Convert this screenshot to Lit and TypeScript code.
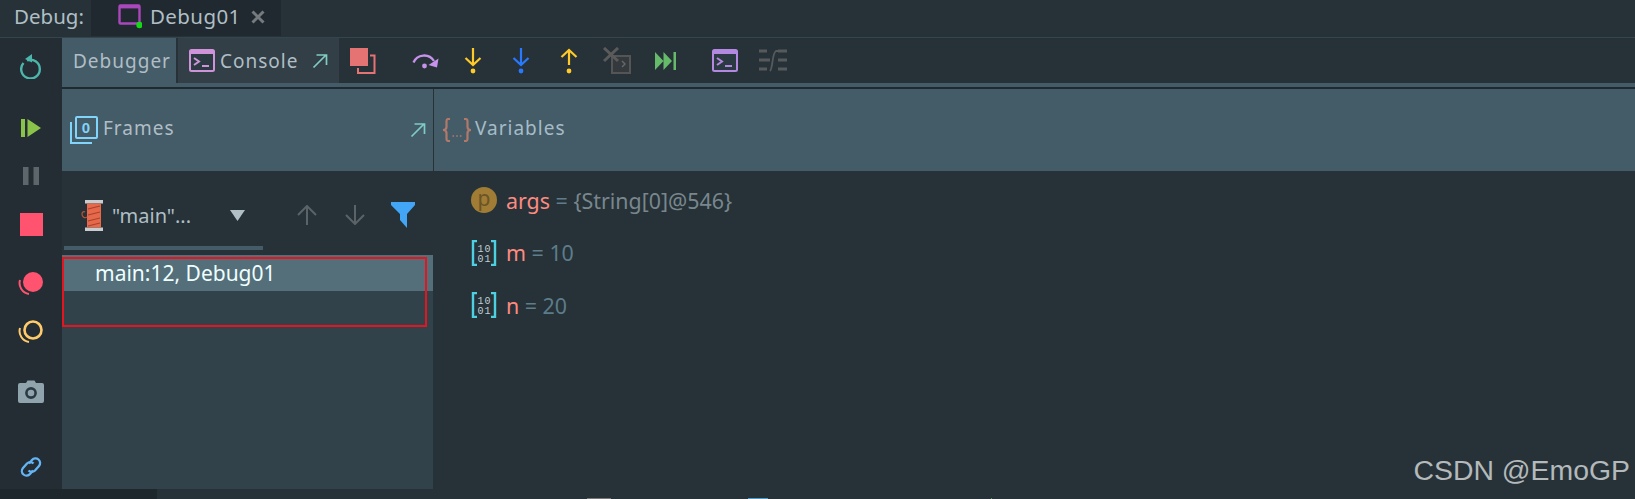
import { LitElement, html, css, svg } from "lit";
import { customElement } from "lit/decorators.js";

const icon = (w: number, h: number, body: unknown) =>
  html`<svg width=${w} height=${h} viewBox="0 0 ${w} ${h}" fill="none">${body}</svg>`;

const consoleIcon = (stroke: string) =>
  icon(26, 23, svg`
    <rect x="1" y="1" width="24" height="21" rx="1.5" fill="#2b3a42" stroke=${stroke} stroke-width="2"/>
    <rect x="1" y="1" width="24" height="4" fill=${stroke}/>
    <path d="M5 9l5 3.5L5 16" stroke=${stroke} stroke-width="2"/>
    <path d="M13 17h7" stroke=${stroke} stroke-width="2"/>
  `);

const arrow = icon(16, 16, svg`<path d="M1.5 14.5L14 2M4.5 2H14.5V12" stroke="#80cbc4" stroke-width="1.7"/>`);

const stepArrow = (color: string, up = false) =>
  icon(18, 26, svg`
    ${up
      ? svg`<path d="M9 2v15M1.5 9L9 2l7.5 7" stroke=${color} stroke-width="2.2"/>`
      : svg`<path d="M9 0v17M1.5 10L9 17l7.5-7" stroke=${color} stroke-width="2.2"/>`}
    <circle cx="9" cy="23" r="2.4" fill=${color}/>
  `);

const matrix = icon(26, 26, svg`
  <path d="M6 1H2v24h4M20 1h4v24h-4" stroke="#4dd0e1" stroke-width="2.4"/>
  <text x="13.5" y="11.5" text-anchor="middle" font-family="Liberation Mono" font-size="10" letter-spacing="1" fill="#c0ced5">10</text>
  <text x="13.5" y="22" text-anchor="middle" font-family="Liberation Mono" font-size="10" letter-spacing="1" fill="#c0ced5">01</text>
`);

@customElement("app-root")
export class AppRoot extends LitElement {
  static styles = css`
    :host {
      display: block;
      position: relative;
      width: 1635px;
      height: 499px;
      overflow: hidden;
      background: #263238;
      color: #b0bec5;
      font-family: "Noto Sans", sans-serif;
      font-size: 19px;
    }

    svg {
      display: block;
      flex: none;
    }

    .top {
      display: flex;
      align-items: stretch;
      height: 37px;
      border-bottom: 1px solid #35454e;
      font-size: 20.5px;
    }
    .top .label {
      padding: 0 7px 0 14px;
      line-height: 32px;
      width: 70px;
    }
    .run-tab {
      display: flex;
      align-items: center;
      width: 190px;
      height: 36px;
      padding-left: 27px;
      box-sizing: border-box;
      background: #1f292f;
      gap: 8px;
      letter-spacing: 0.4px;
    }
    .run-tab span {
      line-height: 32px;
      margin-top: -4px;
    }
    .run-tab .win {
      margin-top: -4px;
    }
    .run-tab .close {
      margin: -3px 0 0 2px;
    }

    .main {
      display: flex;
      height: 451px;
    }

    .side {
      width: 62px;
      flex: none;
      background: #232d33;
      display: grid;
      grid-template-rows: 56px 68px 28px 68px 50px 46px 74px 61px;
      justify-items: center;
      align-items: center;
    }
    .side .last {
      align-self: end;
      margin-bottom: 10px;
    }

    .content {
      flex: 1;
      display: flex;
      flex-direction: column;
      min-width: 0;
    }

    .tabs {
      display: flex;
      height: 49px;
      box-shadow: inset 0 -4px 0 #445b68;
      border-bottom: 2px solid #1f292f;
    }
    .tab {
      display: flex;
      align-items: center;
      letter-spacing: 1px;
    }
    .tab > span,
    .tab.active {
      line-height: 40px;
    }
    .tab.active {
      width: 114px;
      height: 45px;
      padding-left: 11px;
      box-sizing: border-box;
      background: #445b68;
      box-shadow: 0 4px 0 #445b68;
    }
    .tab.console {
      width: 161px;
      height: 45px;
      margin-left: 2px;
      padding-left: 11px;
      box-sizing: border-box;
      background: #323f47;
      gap: 5px;
    }
    .tab.console .arrow {
      margin-left: 9px;
    }
    .btn {
      width: 48px;
      height: 45px;
      display: flex;
      align-items: center;
      justify-content: center;
    }
    .btn.after-gap {
      margin-left: 14px;
    }
    .btn.group {
      margin-left: 12px;
    }

    .panels {
      display: flex;
      flex: 1;
    }
    .frames {
      width: 371px;
      flex: none;
      display: flex;
      flex-direction: column;
      height: 400px;
    }
    .header {
      height: 82px;
      flex: none;
      background: #445b68;
      display: flex;
      align-items: center;
      letter-spacing: 1px;
    }
    .header .title {
      margin-top: -4px;
    }
    .frames .header {
      padding: 0 7px 0 8px;
      gap: 5px;
    }
    .frames .header .arrow {
      margin-left: auto;
    }
    .vars {
      flex: 1;
      border-left: 1px solid #263238;
    }
    .vars .header {
      padding-left: 8px;
      gap: 3px;
      color: #a6bcc7;
    }

    .thread-bar {
      height: 75px;
      flex: none;
      display: flex;
      align-items: center;
      padding: 13px 0 0 19px;
      box-sizing: border-box;
      font-size: 20px;
    }
    .thread-bar .name {
      margin-left: 7px;
      width: 118px;
    }
    .thread-bar .up {
      margin-left: 52px;
    }
    .thread-bar .down {
      margin-left: 28px;
    }
    .thread-bar .filter {
      margin-left: 26px;
    }
    .rule {
      height: 4px;
      width: 199px;
      margin: 0 0 5px 2px;
      background: #445b68;
      flex: none;
    }
    .list {
      flex: 1;
      background: #32424b;
    }
    .row {
      height: 36px;
      line-height: 37px;
      padding-left: 33px;
      background: #546e7a;
      color: #eeffff;
      font-size: 21px;
    }
    .marker {
      position: absolute;
      left: 62px;
      top: 257px;
      width: 365px;
      height: 70px;
      box-sizing: border-box;
      border: 2.5px solid #e5141f;
    }

    .var-list {
      display: flex;
      flex-direction: column;
      gap: 26.5px;
      padding: 16px 0 0 37px;
      font-size: 21.4px;
    }
    .var {
      display: flex;
      align-items: center;
      height: 26px;
      gap: 9px;
      white-space: pre;
    }
    .badge {
      width: 26px;
      height: 26px;
      border-radius: 50%;
      background: #a07c34;
      color: #6b5427;
      font-size: 21px;
      line-height: 23px;
      text-align: center;
      flex: none;
    }
    .var .k {
      color: #ff8a80;
    }
    .var .eq {
      color: #607d8b;
    }
    .var .ref {
      color: #79878d;
    }
    .var .num {
      color: #5d7c8a;
    }

    .foot {
      position: absolute;
      left: 0;
      bottom: 0;
      width: 157px;
      height: 10px;
      background: #1e272c;
    }
    .crumbs {
      position: absolute;
      left: 587px;
      bottom: 0;
      display: flex;
      height: 1px;
    }
    .crumbs .gray {
      width: 24px;
      background: #777;
    }
    .crumbs .blue {
      width: 20px;
      margin-left: 137px;
      background: #4f9ac5;
    }
    .crumbs .green {
      width: 1px;
      margin-left: 223px;
      background: #5f8a5f;
    }
    .mark {
      position: absolute;
      right: 5px;
      top: 450px;
      font-family: "Liberation Sans", sans-serif;
      font-size: 28.4px;
      line-height: 40px;
      color: #b4b9bb;
    }
  `;

  render() {
    return html`
      <div class="top">
        <div class="label">Debug:</div>
        <div class="run-tab">
          <span class="win">${icon(24, 25, svg`
            <rect x="1.5" y="1.5" width="20" height="18" rx="1" stroke="#ab47bc" stroke-width="2.4"/>
            <rect x="1" y="1" width="21" height="3.4" fill="#ab47bc"/>
            <circle cx="21.5" cy="21" r="3.2" fill="#14d814"/>
          `)}</span>
          <span>Debug01</span>
          <span class="close">${icon(14, 14, svg`<path d="M1.5 1.5l11 11M12.5 1.5l-11 11" stroke="#757b7e" stroke-width="3"/>`)}</span>
        </div>
      </div>
      <div class="main">
        <div class="side">
          ${icon(22, 25, svg`<path d="M7 6.5a9.3 9.3 0 1 1-3.5 2.5" stroke="#4db6ac" stroke-width="2.4"/><path d="M12 0v8.5L5 5z" fill="#4db6ac"/>`)}
          ${icon(20, 18, svg`<rect width="4" height="18" fill="#8bc34a"/><path d="M6.5 0L20 9 6.5 18z" fill="#8bc34a"/>`)}
          ${icon(16, 18, svg`<rect width="5.5" height="18" fill="#5c666b"/><rect x="10.5" width="5.5" height="18" fill="#5c666b"/>`)}
          ${icon(23, 23, svg`<rect width="23" height="23" fill="#ff5370"/>`)}
          ${icon(26, 24, svg`<circle cx="15" cy="11" r="10" fill="#ff5370"/><path d="M2 9a11 11 0 0 0 9 14" stroke="#ff5370" stroke-width="2"/>`)}
          ${icon(26, 24, svg`<circle cx="15" cy="11" r="8.5" stroke="#ffcb6b" stroke-width="2.6"/><path d="M2 9a11 11 0 0 0 9 14" stroke="#ffcb6b" stroke-width="2"/>`)}
          ${icon(26, 23, svg`
            <path d="M2 3h6l1.5-2.5h7L18 3h6a2 2 0 0 1 2 2v16a2 2 0 0 1-2 2H2a2 2 0 0 1-2-2V5a2 2 0 0 1 2-2z" fill="#90a4ae"/>
            <circle cx="13" cy="13" r="4.6" stroke="#2b3a42" stroke-width="2.6"/>
          `)}
          <div class="last">${icon(24, 24, svg`
            <path d="M10 8.5l3-3.5a4.5 4.5 0 0 1 7 6l-4 4.5a4.5 4.5 0 0 1-6.5 0" stroke="#64b5f6" stroke-width="2.3"/>
            <path d="M14 15.5l-3 3.5a4.5 4.5 0 0 1-7-6l4-4.5a4.5 4.5 0 0 1 6.5 0" stroke="#64b5f6" stroke-width="2.3"/>
          `)}</div>
        </div>
        <div class="content">
          <div class="tabs">
            <div class="tab active"><span>Debugger</span></div>
            <div class="tab console">
              ${consoleIcon("#ce93d8")}
              <span>Console</span>
              <span class="arrow">${arrow}</span>
            </div>
            <div class="btn">${icon(26, 26, svg`
              <rect width="18" height="18" fill="#e57373"/>
              <path d="M20 7.5h4.5V25H8v-5" stroke="#e57373" stroke-width="2"/>
            `)}</div>
            <div class="btn after-gap">${icon(27, 16, svg`
              <path d="M1.5 9.5C5 1 17 0 22 8" stroke="#c792ea" stroke-width="2.3"/>
              <path d="M26.5 5.5L25 14.5 16.5 12z" fill="#c792ea"/>
              <circle cx="12.5" cy="13" r="2.4" fill="#c792ea"/>
            `)}</div>
            <div class="btn">${stepArrow("#ffca28")}</div>
            <div class="btn">${stepArrow("#2979ff")}</div>
            <div class="btn">${stepArrow("#ffca28", true)}</div>
            <div class="btn">${icon(28, 27, svg`
              <rect x="9" y="9" width="18" height="17" fill="#33393c" stroke="#555" stroke-width="2"/>
              <path d="M1 1l14 13M15 1L1 14" stroke="#5b5b5b" stroke-width="3"/>
              <path d="M19 14l3 3-3 3" stroke="#666" stroke-width="1.5"/>
            `)}</div>
            <div class="btn">${icon(21, 18, svg`
              <path d="M0 0l8.5 9L0 18zM8.5 0l8.5 9-8.5 9z" fill="#66bb6a"/>
              <rect x="18.5" width="2.5" height="18" fill="#66bb6a"/>
            `)}</div>
            <div class="btn group">${consoleIcon("#b388e0")}</div>
            <div class="btn">${icon(28, 23, svg`
              <path d="M0 2h8M0 11h11M0 20h8M19 2h9M19 11h9M19 20h9" stroke="#565a5c" stroke-width="3"/>
              <path d="M11 22c3-3 2-18 6-20h2" stroke="#565a5c" stroke-width="1.8"/>
            `)}</div>
          </div>
          <div class="panels">
            <div class="frames">
              <div class="header">
                ${icon(28, 28, svg`
                  <rect x="6" y="1" width="21" height="21" rx="1" stroke="#81d4fa" stroke-width="2"/>
                  <path d="M1 6v21h21" stroke="#81d4fa" stroke-width="2"/>
                  <text x="16.5" y="17" text-anchor="middle" font-family="Liberation Sans" font-weight="700" font-size="15" fill="#81d4fa">0</text>
                `)}
                <span class="title">Frames</span>
                <span class="arrow">${arrow}</span>
              </div>
              <div class="thread-bar">
                ${icon(24, 31, svg`
                  <rect x="4" y="0" width="18" height="3.5" fill="#c9cdd0"/>
                  <rect x="4" y="27.5" width="18" height="3.5" fill="#c9cdd0"/>
                  <rect x="6" y="3.5" width="14" height="24" fill="#e5694a"/>
                  <path d="M7 9l12-3M7 15l12-3M7 21l12-3M7 26l12-3" stroke="#a8432c" stroke-width="1.2"/>
                  <path d="M6 17c-3 2-5-1-5-3s2-3 3-2" stroke="#b5523a" stroke-width="1.2"/>
                `)}
                <span class="name">"main"...</span>
                ${icon(15, 11, svg`<path d="M0 0h15L7.5 11z" fill="#b0bec5"/>`)}
                <span class="up">${icon(20, 20, svg`<path d="M10 20V2M1 10l9-9 9 9" stroke="#5a6367" stroke-width="2"/>`)}</span>
                <span class="down">${icon(20, 20, svg`<path d="M10 0v18M1 10l9 9 9-9" stroke="#5a6367" stroke-width="2"/>`)}</span>
                <span class="filter">${icon(24, 26, svg`<path d="M0 0h24v3l-8 9v14l-7-8v-6L0 3z" fill="#42a5f5"/>`)}</span>
              </div>
              <div class="rule"></div>
              <div class="list">
                <div class="row">main:12, Debug01</div>
              </div>
            </div>
            <div class="vars">
              <div class="header">
                <span>${icon(30, 24, svg`
                  <path d="M8 1H6.500Q4.500 1 4.500 3v6q0 3-3.500 3 3.500 0 3.500 3v6q0 2 2 2H8M22 1h1.500q2 0 2 2v6q0 3 3.500 3-3.500 0-3.500 3v6q0 2-2 2H22" stroke="#b0796a" stroke-width="2.200"/>
                  <path d="M10.500 18h1.600M14.200 18h1.600M17.900 18h1.600" stroke="#b0796a" stroke-width="1.500"/>
                `)}</span>
                <span class="title">Variables</span>
              </div>
              <div class="var-list">
                <div class="var">
                  <span class="badge">p</span>
                  <span><span class="k">args</span><span class="eq"> = </span><span class="ref">{String[0]@546}</span></span>
                </div>
                <div class="var">
                  ${matrix}
                  <span><span class="k">m</span><span class="eq"> = </span><span class="num">10</span></span>
                </div>
                <div class="var">
                  ${matrix}
                  <span><span class="k">n</span><span class="eq"> = </span><span class="num">20</span></span>
                </div>
              </div>
            </div>
          </div>
        </div>
      </div>
      <div class="marker"></div>
      <div class="foot"></div>
      <div class="crumbs">
        <span class="gray"></span>
        <span class="blue"></span>
        <span class="green"></span>
      </div>
      <div class="mark">CSDN @EmoGP</div>
    `;
  }
}
